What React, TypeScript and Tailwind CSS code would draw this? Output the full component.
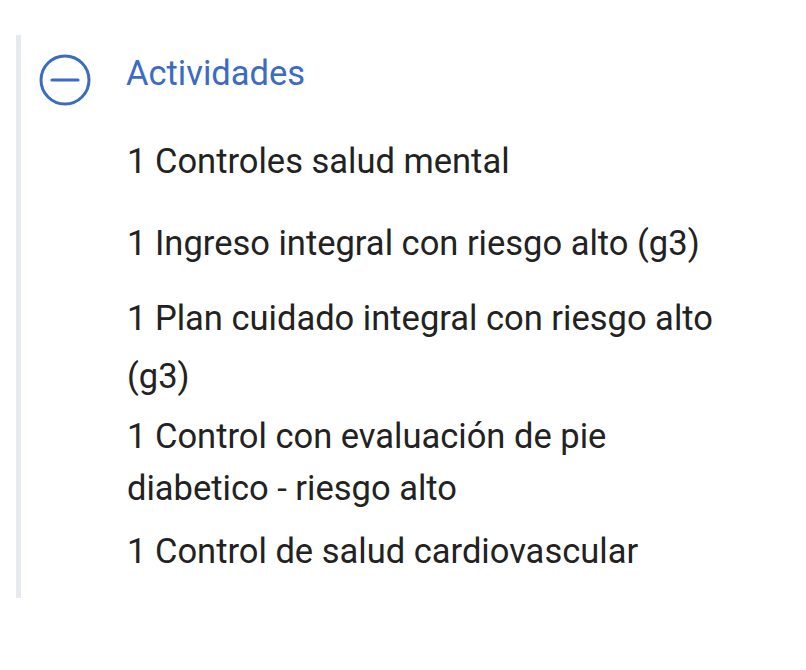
const items = [
  { label: '1 Controles salud mental', className: 'mt-[29px] leading-[52px]' },
  { label: '1 Ingreso integral con riesgo alto (g3)', className: 'mt-[30px] leading-[52px]' },
  { label: '1 Plan cuidado integral con riesgo alto (g3)', className: 'mt-[20px] leading-[58px]' },
  { label: '1 Control con evaluación de pie diabetico - riesgo alto', className: 'mt-[5px] leading-[52px]' },
  { label: '1 Control de salud cardiovascular', className: 'mt-[11px] leading-[52px]' },
];

const MinusCircle = () => (
  <svg width="52" height="52" viewBox="0 0 52 52" fill="none" className="mt-[7px] shrink-0">
    <circle cx="26" cy="26" r="24" stroke="#3b6cc1" strokeWidth="3" />
    <line x1="13" y1="26" x2="39" y2="26" stroke="#3b6cc1" strokeWidth="3.2" strokeLinecap="round" />
  </svg>
);

export default function App() {
  return (
    <div className="w-[806px] h-[670px] bg-white font-['Roboto',sans-serif]">
      <div className="ml-[16px] pt-[35px]">
        <div className="border-l-[5px] border-[#e6e9ee] h-[563px] pt-[12px] pl-[18px]">
          <div className="flex items-start">
            <MinusCircle />
            <span className="ml-[35px] text-[34.5px] leading-[52px] text-[#3b6cc1]">Actividades</span>
          </div>
          <ul className="ml-[88px] w-[600px] flex flex-col">
            {items.map((item) => (
              <li key={item.label} className={`${item.className} text-[34.5px] text-[#222222]`}>
                {item.label}
              </li>
            ))}
          </ul>
        </div>
      </div>
    </div>
  );
}
